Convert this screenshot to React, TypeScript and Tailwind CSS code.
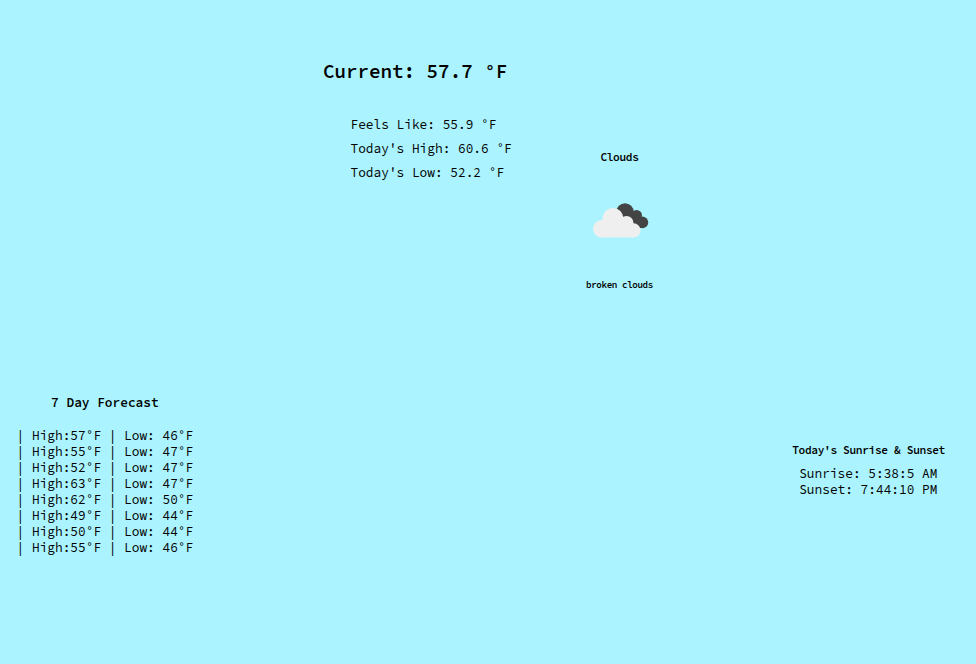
const days = [
  [57, 46], [55, 47], [52, 47], [63, 47], [62, 50], [49, 44], [50, 44], [55, 46],
];

function CloudIcon() {
  return (
    <svg width="56" height="36" viewBox="0 0 56 36" className="block">
      <g fill="#444444">
        <circle cx="32" cy="9" r="8.7" />
        <circle cx="43.5" cy="12.5" r="5.5" />
        <circle cx="49.3" cy="19.3" r="5.9" />
        <path d="M28 12H44L50 20V25H38Z" />
      </g>
      <g fill="#efefef">
        <circle cx="8.8" cy="25.7" r="8.8" />
        <circle cx="20" cy="15.4" r="10.4" />
        <circle cx="33.5" cy="20" r="7" />
        <circle cx="40.5" cy="27.4" r="7.1" />
        <path d="M8.8 34.5V17L20 8L34 16L40.5 24V34.5Z" />
      </g>
    </svg>
  );
}

export default function App() {
  return (
    <main className="flex h-[664px] w-[976px] flex-col overflow-hidden bg-[#abf4ff] font-['Source_Code_Pro','Liberation_Mono',monospace] text-[12.8px] leading-4 text-black antialiased">
      <section className="flex h-[394px] pl-[323px]">
        <div className="w-[262.5px] pt-[59px]">
          <h1 className="text-[19.2px] leading-6 font-semibold whitespace-pre">Current: 57.7 °F</h1>
          <div className="mt-[29px] ml-[27.5px] leading-6 whitespace-pre">
            <p>Feels Like: 55.9 °F</p>
            <p>Today's High: 60.6 °F</p>
            <p>Today's Low: 52.2 °F</p>
          </div>
        </div>
        <div className="flex w-[68px] flex-col items-center pt-[149px] text-center">
          <h2 className="text-[11.2px] leading-4 tracking-[-0.346px] font-semibold">Clouds</h2>
          <div className="mt-[38px] ml-[2px]"><CloudIcon /></div>
          <h3 className="mt-[38px] text-[9.2px] leading-4 tracking-[-0.374px] font-semibold whitespace-nowrap">broken clouds</h3>
        </div>
      </section>
      <section className="flex justify-between pr-[31px] pl-[16.6px]">
        <div className="w-[178px]">
          <h2 className="pl-[34.5px] font-semibold">7 Day Forecast</h2>
          <ul className="mt-[17px] whitespace-pre">
            {days.map(([high, low], i) => (
              <li key={i}>{`| High:${high}°F | Low: ${low}°F`}</li>
            ))}
          </ul>
        </div>
        <div className="pt-12 whitespace-pre">
          <h2 className="text-[11.2px] tracking-[-0.346px] font-semibold">Today's Sunrise &amp; Sunset</h2>
          <div className="mt-[7px] pl-[7px]">
            <p>Sunrise: 5:38:5 AM</p>
            <p>Sunset: 7:44:10 PM</p>
          </div>
        </div>
      </section>
    </main>
  );
}
